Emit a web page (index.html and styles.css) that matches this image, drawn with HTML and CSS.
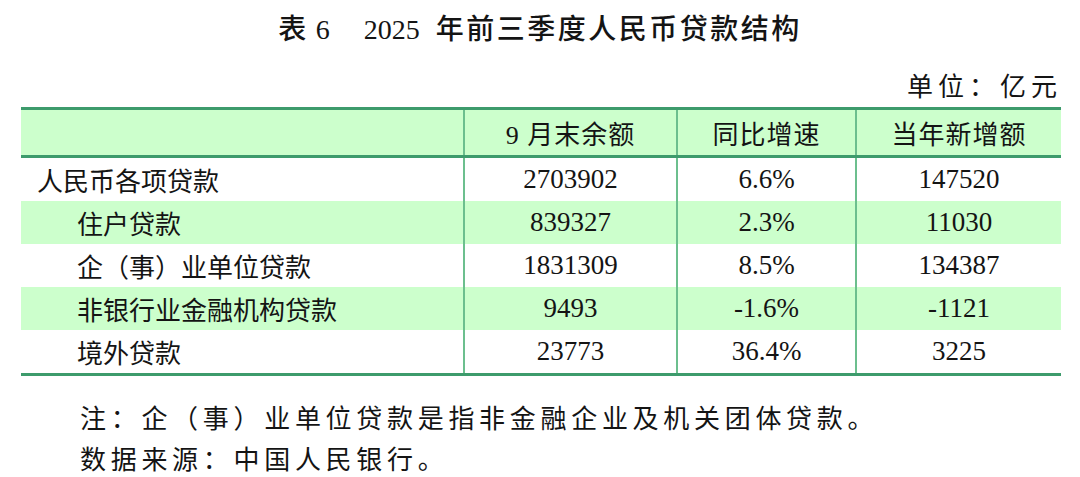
FILE: index.html
```html
<!DOCTYPE html>
<html lang="zh-CN">
<head>
<meta charset="utf-8">
<title>表6 2025年前三季度人民币贷款结构</title>
<link rel="stylesheet" href="styles.css">
</head>
<body>
<h1 class="title">表<span class="num"> 6</span><span class="gap"></span><span class="num year">2025</span>年前三季度人民币贷款结构</h1>
<div class="unit">单位：亿元</div>
<table class="loans">
  <colgroup>
    <col class="c-name"><col class="c-bal"><col class="c-yoy"><col class="c-new">
  </colgroup>
  <thead>
    <tr><th></th><th>9 月末余额</th><th>同比增速</th><th>当年新增额</th></tr>
  </thead>
  <tbody>
    <tr><td class="name">人民币各项贷款</td><td>2703902</td><td>6.6%</td><td>147520</td></tr>
    <tr class="alt"><td class="name sub">住户贷款</td><td>839327</td><td>2.3%</td><td>11030</td></tr>
    <tr><td class="name sub">企（事）业单位贷款</td><td>1831309</td><td>8.5%</td><td>134387</td></tr>
    <tr class="alt"><td class="name sub">非银行业金融机构贷款</td><td>9493</td><td>-1.6%</td><td>-1121</td></tr>
    <tr><td class="name sub">境外贷款</td><td>23773</td><td>36.4%</td><td>3225</td></tr>
  </tbody>
</table>
<div class="notes">
  <p>注：企（事）业单位贷款是指非金融企业及机关团体贷款。</p>
  <p>数据来源：中国人民银行。</p>
</div>
</body>
</html>
```

FILE: styles.css
```css
html, body {
  margin: 0;
  padding: 0;
  background: #ffffff;
}
body {
  width: 1080px;
  height: 477px;
  overflow: hidden;
  font-family: "Liberation Serif", "Noto Sans CJK SC", serif;
  color: #141414;
}
.title {
  margin: 0;
  padding-top: 12px;
  height: 36px;
  line-height: 36px;
  font-size: 28px;
  font-weight: 500;
  letter-spacing: 2.5px;
  text-align: center;
}
.title .num {
  font-size: 28px;
  font-weight: normal;
  letter-spacing: 0;
}
.title .year {
  margin-right: 16px;
}
.title .gap {
  display: inline-block;
  width: 34px;
}
.unit {
  margin-top: 25px;
  height: 30px;
  line-height: 30px;
  font-size: 26px;
  letter-spacing: 5px;
  text-align: right;
  padding-right: 18px;
}
.loans {
  margin-top: 4px;
  margin-left: 21px;
  width: 1040px;
  border-collapse: collapse;
  table-layout: fixed;
  font-size: 26px;
}
.c-name { width: 443px; }
.c-bal { width: 213px; }
.c-yoy { width: 179px; }
.c-new { width: 205px; }
.loans thead tr {
  background: #ccffcc;
  border-top: 3px solid #3d9b6c;
  border-bottom: 3px solid #3d9b6c;
}
.loans tbody tr:last-child {
  border-bottom: 3px solid #3d9b6c;
}
.loans th {
  height: 45px;
  padding: 0;
  font-weight: normal;
  text-align: center;
  letter-spacing: 1px;
}
.loans td {
  height: 43px;
  padding: 0;
  text-align: center;
  font-size: 27px;
}
.loans th + th, .loans td + td {
  border-left: 2px solid #6cbf8e;
}
.loans td.name {
  text-align: left;
  padding-left: 16px;
  font-size: 26px;
}
.loans td.name.sub {
  padding-left: 56px;
}
.loans tr.alt {
  background: #ccffcc;
}
.notes {
  margin-top: 23px;
  padding-left: 80px;
}
.notes p {
  margin: 0;
  height: 41px;
  line-height: 41px;
  font-size: 26px;
  letter-spacing: 4.7px;
}
```
